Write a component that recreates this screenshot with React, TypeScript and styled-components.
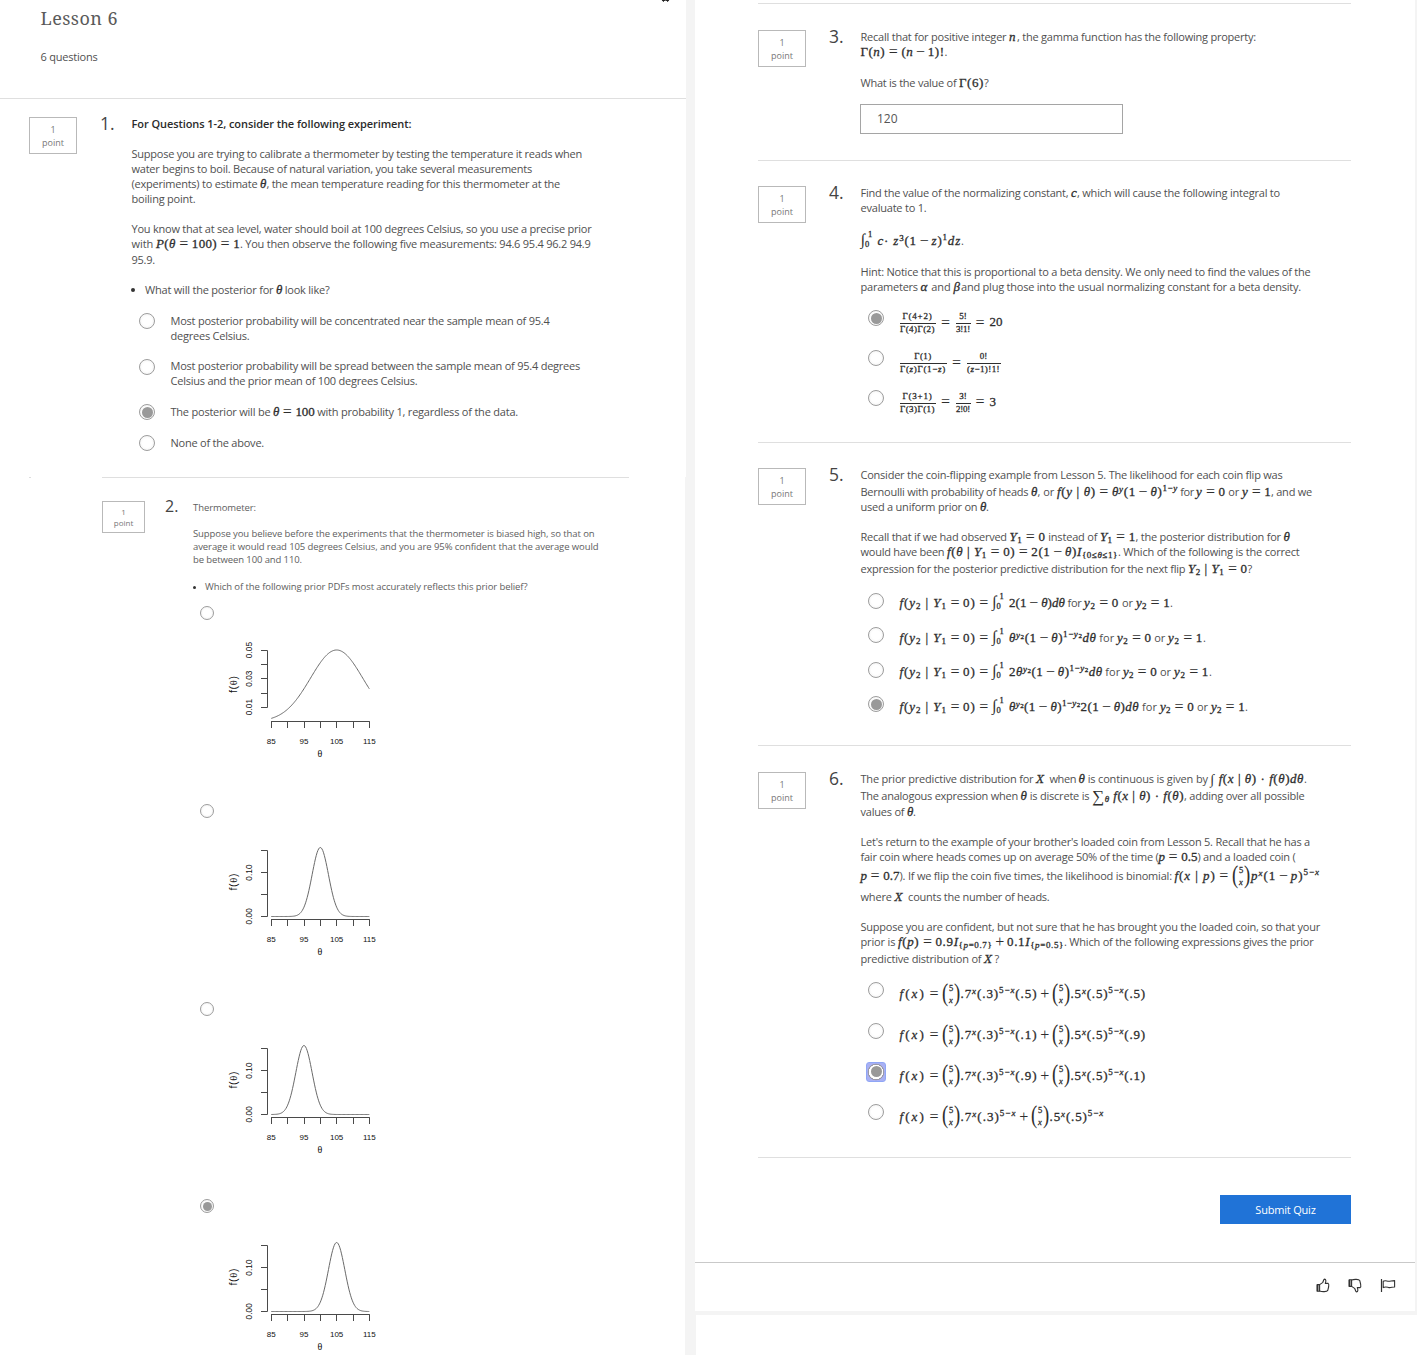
import React, { Fragment, isValidElement, useLayoutEffect, useRef } from "react";
import styled, { createGlobalStyle, css } from "styled-components";

const SANS = '"Open Sans", "Noto Sans", sans-serif';
const SERIF = '"Liberation Serif", "Times New Roman", serif';

const GlobalStyle = createGlobalStyle`
  * { box-sizing: border-box; }
  body { margin: 0; background: #f4f4f4; font-family: ${SANS}; overflow: hidden; }
`;

/* ---------- page frame ---------- */

const Page = styled.main`
  display: flex;
  justify-content: space-between;
  width: 1417px;
  height: 1355px;
  overflow: hidden;
  background: #f4f4f4;
`;
const LeftColumn = styled.div`
  display: flex;
  flex-direction: column;
  width: 686px;
`;
const RightColumn = styled.div`
  display: flex;
  flex-direction: column;
  width: 722px;
`;
const Panel = styled.section<{ $w: number; $h: number }>`
  flex: none;
  display: flex;
  flex-direction: column;
  width: ${(p) => p.$w}px;
  height: ${(p) => p.$h}px;
  background: #fff;
`;
const BlankPanel = styled.div`
  margin: 4px 0 0 1px;
  flex: 1;
  background: #fff;
`;
const Header = styled.header`
  display: flex;
  justify-content: space-between;
  height: 99px;
  padding: 0 16px 0 40.5px;
  border-bottom: 1px solid #dfdfdf;
`;
const LessonTitle = styled.h1`
  margin: 5px 0 25px;
  height: 27px;
  font: 400 18px/27px "Noto Serif", "DejaVu Serif Condensed", "DejaVu Serif", serif;
  color: #5a5a5a;
`;
const Rule = styled.div<{ $left?: number; $width?: number }>`
  flex: none;
  height: 1px;
  margin-left: ${(p) => p.$left ?? 63}px;
  width: ${(p) => p.$width ?? 593}px;
  background: #dfdfdf;
`;
const Speck = styled.span`
  width: 2px;
  height: 1px;
  margin-left: 29px;
  background: #ddd;
`;
const RuleRow = styled.div`
  display: flex;
  height: 1px;
`;

/* ---------- question layout ---------- */

const Question = styled.article<{ $h: number; $pt: number; $pl: number }>`
  display: flex;
  flex: none;
  align-items: flex-start;
  height: ${(p) => p.$h}px;
  padding: ${(p) => p.$pt}px 0 0 ${(p) => p.$pl}px;
`;
const PointBox = styled.div<{ $small?: boolean }>`
  flex: none;
  width: ${(p) => (p.$small ? 43 : 48)}px;
  height: ${(p) => (p.$small ? 32 : 37)}px;
  padding-top: ${(p) => (p.$small ? 4 : 5)}px;
  border: 1px solid #b9b9b9;
  display: flex;
  flex-direction: column;
  align-items: center;
  font-size: ${(p) => (p.$small ? 8 : 9)}px;
  line-height: ${(p) => (p.$small ? 11 : 13)}px;
  color: #777;
`;
const QuestionNumber = styled.div<{ $small?: boolean }>`
  flex: none;
  margin: ${(p) => (p.$small ? "-5px 0 0 20px" : "-4px 0 0 23px")};
  width: ${(p) => (p.$small ? 28 : 31.5)}px;
  font-size: ${(p) => (p.$small ? 16 : 17.5)}px;
  font-weight: 400;
  line-height: 20px;
  color: #444;
`;
const Content = styled.div<{ $small?: boolean }>`
  display: flex;
  flex-direction: column;
  margin-top: -1px;
  font-size: ${(p) => (p.$small ? 9.5 : 11)}px;
  color: ${(p) => (p.$small ? "#5e5e5e" : "#505050")};
`;
const Line = styled.div<{ $mt?: number; $h?: number; $bold?: boolean }>`
  display: flex;
  align-items: baseline;
  flex: none;
  margin-top: ${(p) => p.$mt ?? 0}px;
  height: ${(p) => p.$h ?? 15}px;
  line-height: ${(p) => p.$h ?? 15}px;
  ${(p) => p.$bold && css`font-weight: 600; color: #2b2b2b;`}
`;
const Bullet = styled.span<{ $size: number; $gap: number }>`
  align-self: center;
  width: ${(p) => p.$size}px;
  height: ${(p) => p.$size}px;
  border-radius: 50%;
  background: #333;
  margin: 1px ${(p) => p.$gap}px 0 -0.5px;
`;
const OptionRow = styled.label<{ $mt?: number; $h?: number }>`
  display: flex;
  align-items: flex-start;
  margin-top: ${(p) => p.$mt ?? 0}px;
  height: ${(p) => (p.$h ? `${p.$h}px` : "auto")};
  padding-left: 7.5px;
`;
const OptionBody = styled.div<{ $pt?: number }>`
  display: flex;
  flex-direction: column;
  padding-top: ${(p) => p.$pt ?? 0}px;
  margin-left: 15.5px;
`;
const RadioDot = styled.span<{ $checked?: boolean; $focus?: boolean; $size?: number; $mt?: number }>`
  flex: none;
  display: flex;
  align-items: center;
  justify-content: center;
  width: ${(p) => p.$size ?? 16}px;
  height: ${(p) => p.$size ?? 16}px;
  margin-top: ${(p) => p.$mt ?? 0}px;
  border: 1px solid #9d9d9d;
  border-radius: 50%;
  background: radial-gradient(circle, #fff 45%, #ececec 100%);
  &::after {
    content: "";
    width: ${(p) => (p.$size ?? 16) - 5}px;
    height: ${(p) => (p.$size ?? 16) - 5}px;
    border-radius: 50%;
    background: ${(p) => (p.$checked ? "#999" : "transparent")};
  }
  ${(p) => p.$focus && css`
    width: 20px;
    height: 20px;
    margin: -2px;
    border: 1px solid #8fa6f6;
    border-radius: 3px;
    background: radial-gradient(circle, #fff 0 7px, #9a9aa8 7.4px 8px, #a9b0f3 8.6px);
  `}
`;
const AnswerInput = styled.input`
  margin: 14px 0 0 -0.5px;
  width: 263px;
  height: 30px;
  padding: 0 16px 1px;
  border: 1px solid #a5a5a5;
  border-radius: 0;
  background: #fff;
  font: 400 12px ${SANS};
  color: #555;
  outline: none;
`;

/* ---------- text runs with a set measure ---------- */

const RunBox = styled.span<{ $w: number; $math?: boolean }>`
  flex: none;
  display: inline-block;
  width: ${(p) => p.$w}px;
  white-space: pre;
  ${(p) => p.$math && css`
    font-family: ${SERIF};
    font-size: 13px;
    color: #2e2e2e;
    -webkit-text-stroke: 0.3px #2e2e2e;
  `}
`;
const RunInner = styled.span`
  display: inline-block;
`;

/* Tracks the letters of an element so that it takes exactly the width w. */
function useTracking(w: number) {
  const ref = useRef<HTMLSpanElement>(null);
  useLayoutEffect(() => {
    const el = ref.current;
    if (!el) return;
    el.style.letterSpacing = "0px";
    const natural = el.getBoundingClientRect().width;
    el.style.letterSpacing = "1px";
    const slope = el.getBoundingClientRect().width - natural;
    el.style.letterSpacing = slope > 0 ? `${(w - natural) / slope}px` : "0px";
  }, [w]);
  return ref;
}

type RunProps = { w: number; children: React.ReactNode };

function T({ w, children }: RunProps) {
  const ref = useTracking(w);
  return (
    <RunBox $w={w}>
      <RunInner ref={ref}>{children}</RunInner>
    </RunBox>
  );
}

const Relation = styled.span<{ $gap: number }>`
  margin: 0 ${(p) => p.$gap}px;
  font-size: 16px;
  line-height: 0;
  letter-spacing: 0;
  vertical-align: -1px;
  -webkit-text-stroke-width: 0;
`;

/* Sets spaced = − + signs wider, as a math typesetter does. */
function typeset(node: React.ReactNode): React.ReactNode {
  if (typeof node === "string") {
    return node.split(/(\s+[=−+]\s*)/).map((part, i) =>
      i % 2 ? <Relation key={i} $gap={part.includes("=") ? 3.6 : 2.8}>{part.trim()}</Relation> : part,
    );
  }
  if (Array.isArray(node)) return node.map((n, i) => <Fragment key={i}>{typeset(n)}</Fragment>);
  if (isValidElement<{ children?: React.ReactNode }>(node) && node.type === Fragment) {
    return <>{typeset(node.props.children)}</>;
  }
  return node;
}

function M({ w, children }: RunProps) {
  const ref = useTracking(w);
  return (
    <RunBox $w={w} $math>
      <RunInner ref={ref}>{typeset(children)}</RunInner>
    </RunBox>
  );
}

/* ---------- math pieces ---------- */

const V = styled.i`
  font-style: italic;
`;
const Sup = styled.span<{ $up?: number }>`
  font-size: 9px;
  line-height: 0;
  vertical-align: ${(p) => p.$up ?? 4}px;
`;
const Sub = styled.span`
  font-size: 9px;
  line-height: 0;
  vertical-align: -2px;
`;
const Sub2 = styled.span`
  font-size: 7px;
  line-height: 0;
  vertical-align: -1px;
`;
const BigOp = styled.span<{ $size: number; $drop: number }>`
  font-size: ${(p) => p.$size}px;
  line-height: 0;
  vertical-align: ${(p) => p.$drop}px;
  -webkit-text-stroke-width: 0;
`;
const LimitsBox = styled.span`
  flex: none;
  display: inline-flex;
  align-items: baseline;
  width: 17px;
  font-family: ${SERIF};
  color: #2e2e2e;
`;
const Limits = styled.span`
  display: inline-flex;
  flex-direction: column;
  align-self: center;
  justify-content: space-between;
  height: 20px;
  margin: -11px 0 0;
  font-size: 8.5px;
  line-height: 10px;
  -webkit-text-stroke: 0.3px #2e2e2e;
`;
const LimitTop = styled.span`
  padding-left: 3px;
`;
const Integral = () => (
  <LimitsBox>
    <BigOp $size={16} $drop={-3}>∫</BigOp>
    <Limits>
      <LimitTop>1</LimitTop>
      <span>0</span>
    </Limits>
  </LimitsBox>
);

const BinomBox = styled.span<{ $w: number }>`
  flex: none;
  align-self: center;
  display: inline-flex;
  align-items: center;
  width: ${(p) => p.$w}px;
  height: 24px;
  margin: -4px 0;
  font-family: ${SERIF};
  color: #2e2e2e;
`;
const Paren = styled.span`
  width: 6px;
  margin-top: -2px;
  font-size: 22px;
  line-height: 20px;
  display: flex;
  justify-content: center;
  transform: scale(0.85, 1.12);
`;
const BinomColumn = styled.span`
  display: flex;
  flex-direction: column;
  align-items: center;
  width: 6px;
  font-size: 8.5px;
  line-height: 12px;
  -webkit-text-stroke: 0.3px #2e2e2e;
`;
const Binom = ({ w = 18.5 }: { w?: number }) => (
  <BinomBox $w={w}>
    <Paren>(</Paren>
    <BinomColumn>
      <span>5</span>
      <V>x</V>
    </BinomColumn>
    <Paren>)</Paren>
  </BinomBox>
);

const FractionRow = styled.div`
  display: flex;
  align-items: center;
  height: 25px;
  margin-top: -3px;
  font-family: ${SERIF};
  line-height: 15px;
  color: #2e2e2e;
`;
const Operator = styled.span<{ $w: number }>`
  width: ${(p) => p.$w}px;
  padding-bottom: 3px;
  font-size: 16px;
  text-align: center;
`;
const Value = styled.span`
  padding-bottom: 3px;
`;
const FractionBox = styled.span<{ $w: number }>`
  display: flex;
  flex-direction: column;
  align-items: center;
  width: ${(p) => p.$w}px;
`;
const Numerator = styled.span`
  height: 12px;
  line-height: 11px;
`;
const FractionBar = styled.span`
  align-self: stretch;
  height: 1px;
  background: #2e2e2e;
`;
const Denominator = styled.span`
  height: 12px;
  line-height: 10px;
`;
const SmallMath = styled.span<{ $w: number }>`
  display: block;
  width: ${(p) => p.$w}px;
  font-size: 9px;
  white-space: pre;
  -webkit-text-stroke: 0.3px #2e2e2e;
`;
function SmallRun({ w, children }: RunProps) {
  const ref = useTracking(w);
  return (
    <SmallMath $w={w}>
      <RunInner ref={ref}>{children}</RunInner>
    </SmallMath>
  );
}
type FractionProps = { w: number; num: React.ReactNode; numW: number; den: React.ReactNode; denW: number };
const Fraction = ({ w, num, numW, den, denW }: FractionProps) => (
  <FractionBox $w={w}>
    <Numerator><SmallRun w={numW}>{num}</SmallRun></Numerator>
    <FractionBar />
    <Denominator><SmallRun w={denW}>{den}</SmallRun></Denominator>
  </FractionBox>
);

/* ---------- density plots ---------- */

const PlotOption = styled.label<{ $h: number }>`
  display: flex;
  flex: none;
  flex-direction: column;
  height: ${(p) => p.$h}px;
  padding-left: 7px;
`;
const PlotSvg = styled.svg`
  flex: none;
  display: block;
  margin: 10px 0 0 20px;
  font-family: "Liberation Sans", Arial, sans-serif;
  font-size: 8px;
  fill: #111;
`;

type PlotProps = {
  mean: number;
  sd: number;
  peak: number;
  zero: number;
  ticks: number[];
  labels: [string, number][];
  axisY: number;
  titleY: number;
};
const xAt = (v: number) => 51.3 + ((v - 85) / 30) * 98;

function Plot({ mean, sd, peak, zero, ticks, labels, axisY, titleY }: PlotProps) {
  const points: string[] = [];
  for (let v = 85; v <= 115.001; v += 0.25) {
    const d = Math.exp(-((v - mean) ** 2) / (2 * sd * sd));
    points.push(`${xAt(v).toFixed(2)},${(zero - (zero - peak) * d).toFixed(2)}`);
  }
  return (
    <PlotSvg width="170" height="132" viewBox="0 0 170 132">
      <g stroke="#4a4a4a" strokeWidth="1" fill="none">
        <path d={`M47.5 ${ticks[0]}V${ticks[ticks.length - 1]}`} />
        {ticks.map((t) => <path key={t} d={`M41 ${t}H47.5`} />)}
        <path d={`M51 ${axisY}H149.8`} />
        {[0, 1, 2, 3, 4, 5, 6].map((i) => (
          <path key={i} d={`M${51.5 + Math.round(i * 16.33)} ${axisY}v6.5`} />
        ))}
        <polyline points={points.join(" ")} stroke="#6a6a6a" />
      </g>
      {[85, 95, 105, 115].map((v) => (
        <text key={v} x={xAt(v)} y="114" textAnchor="middle">{v}</text>
      ))}
      <text x="100" y="127" textAnchor="middle" fontFamily="Liberation Serif" fontSize="10">θ</text>
      {labels.map(([s, y]) => (
        <text key={s} transform={`translate(32.3 ${y}) rotate(-90)`} textAnchor="middle" fontSize="8.4">{s}</text>
      ))}
      <text transform={`translate(16.5 ${titleY}) rotate(-90)`} textAnchor="middle" fontSize="10.5" textLength="17">
        f(<tspan fontFamily="Liberation Serif">θ</tspan>)
      </text>
    </PlotSvg>
  );
}
const NARROW = {
  sd: 2.5,
  peak: 19.5,
  zero: 88.5,
  ticks: [22.5, 44.5, 66.5, 88.5],
  labels: [["0.10", 44.6], ["0.00", 88.3]] as [string, number][],
  axisY: 91.5,
  titleY: 54,
};

/* ---------- footer ---------- */

const SubmitButton = styled.button`
  flex: none;
  align-self: flex-end;
  margin: 37px 64px 0 0;
  width: 131px;
  height: 29px;
  padding: 0;
  border: 0;
  background: #2073d7;
  color: #fff;
  font: 400 11px/29px ${SANS};
  letter-spacing: -0.2px;
`;
const Footer = styled.footer`
  flex: none;
  display: flex;
  justify-content: flex-end;
  align-items: flex-start;
  gap: 18px;
  margin-top: 38px;
  height: 49px;
  padding: 15px 19px 0 0;
  border-top: 1px solid #c9c9c9;
`;
const Glyph = styled.svg`
  display: block;
  fill: none;
  stroke: #333;
  stroke-width: 1.1;
  stroke-linejoin: round;
`;
const ThumbPaths = () => (
  <>
    <path d="M3.6 6.6L6.6 4.6C7.6 3.2 7.4 1.2 8.6 1.1C10 1.1 10.2 3 9.3 5.4H12.2C13.2 6 12.9 7.4 12.6 9L11.7 12.6C11 13.9 6 13.9 3.6 13.1" />
    <path d="M1.2 6.6H3.6V13.2H1.2Z" />
    <path d="M1.6 6.6V13.2" strokeWidth="1.8" />
  </>
);

const Points = ({ small }: { small?: boolean }) => (
  <PointBox $small={small}>
    <span>1</span>
    <span>point</span>
  </PointBox>
);

/* ---------- repeated formulas ---------- */

const Y1 = () => <><V>Y</V><Sub>1</Sub></>;
const y2 = <><V>y</V><Sub>2</Sub></>;
const expY2 = <Sup><V>y</V><Sub2>2</Sub2></Sup>;
const expOneY2 = <Sup $up={5}>1−<V>y</V><Sub2>2</Sub2></Sup>;

type PosteriorProps = { integrand: React.ReactNode; widths: [number, number, number, number, number, number]; checked?: boolean };
const PosteriorOption = ({ integrand, widths, checked }: PosteriorProps) => (
  <OptionRow $h={34.6}>
    <RadioDot $checked={checked} />
    <OptionBody $pt={2.7}>
      <Line>
        <M w={92.5}><V>f</V>({y2} | <Y1 /> = 0) = </M>
        <Integral />
        <M w={widths[0]}>{integrand}</M>
        <T w={widths[1]}> for </T>
        <M w={widths[2]}>{y2} = 0</M>
        <T w={widths[3]}> or </T>
        <M w={widths[4]}>{y2} = 1</M>
        <T w={widths[5]}>.</T>
      </Line>
    </OptionBody>
  </OptionRow>
);

const exp5x = <Sup $up={5}>5−<V>x</V></Sup>;
type MixtureProps = { first?: string; second?: string; checked?: boolean };
const MixtureOption = ({ first, second, checked }: MixtureProps) => (
  <OptionRow $h={40.75}>
    <RadioDot $checked={checked} $focus={checked} />
    <OptionBody $pt={4.2}>
      <Line>
        <M w={42.5}><V>f</V>(<V>x</V>) = </M>
        <Binom />
        <M w={first ? 91.5 : 70.5}>.7<Sup><V>x</V></Sup>(.3){exp5x}{first && `(${first})`} + </M>
        <Binom />
        <M w={second ? 75.5 : 54.5}>.5<Sup><V>x</V></Sup>(.5){exp5x}{second && `(${second})`}</M>
      </Line>
    </OptionBody>
  </OptionRow>
);

const θ = <V>θ</V>;

export default function App() {
  return (
    <>
      <GlobalStyle />
      <Page>
        <LeftColumn>
          <Panel $w={686} $h={477}>
            <Header>
              <div>
                <LessonTitle><T w={77.5}>Lesson 6</T></LessonTitle>
                <Content>
                  <Line $mt={-7}><T w={57}>6 questions</T></Line>
                </Content>
              </div>
              <Glyph width="9" height="3" viewBox="0 0 9 3">
                <path d="M1 0H8L6.6 1.6L5 0H4L2.4 1.6Z" fill="#222" stroke="#222" strokeWidth="0.8" />
              </Glyph>
            </Header>
            <Question $h={378} $pt={18} $pl={29}>
              <Points />
              <QuestionNumber>1.</QuestionNumber>
              <Content>
                <Line $bold><T w={280}>For Questions 1-2, consider the following experiment:</T></Line>
                <Line $mt={15}><T w={450.5}>Suppose you are trying to calibrate a thermometer by testing the temperature it reads when</T></Line>
                <Line><T w={400.5}>water begins to boil. Because of natural variation, you take several measurements</T></Line>
                <Line>
                  <T w={128.5}>(experiments) to estimate </T><M w={6.5}>{θ}</M>
                  <T w={293.5}>, the mean temperature reading for this thermometer at the</T>
                </Line>
                <Line><T w={64}>boiling point.</T></Line>
                <Line $mt={15}><T w={460}>You know that at sea level, water should boil at 100 degrees Celsius, so you use a precise prior</T></Line>
                <Line>
                  <T w={24.5}>with </T><M w={84}><V>P</V>({θ} = 100) = 1</M>
                  <T w={350.5}>. You then observe the following five measurements: 94.6 95.4 96.2 94.9</T>
                </Line>
                <Line $mt={1}><T w={23.5}>95.9.</T></Line>
                <Line $mt={15}>
                  <Bullet $size={4} $gap={10} /><T w={131}>What will the posterior for </T><M w={6}>{θ}</M><T w={47.5}> look like?</T>
                </Line>
                <OptionRow $mt={16}>
                  <RadioDot />
                  <OptionBody>
                    <Line><T w={379}>Most posterior probability will be concentrated near the sample mean of 95.4</T></Line>
                    <Line><T w={79}>degrees Celsius.</T></Line>
                  </OptionBody>
                </OptionRow>
                <OptionRow $mt={15}>
                  <RadioDot $mt={1} />
                  <OptionBody>
                    <Line><T w={409.5}>Most posterior probability will be spread between the sample mean of 95.4 degrees</T></Line>
                    <Line><T w={247}>Celsius and the prior mean of 100 degrees Celsius.</T></Line>
                  </OptionBody>
                </OptionRow>
                <OptionRow $mt={16}>
                  <RadioDot $checked />
                  <OptionBody>
                    <Line>
                      <T w={102.5}>The posterior will be </T><M w={41.5}>{θ} = 100</M>
                      <T w={203.5}> with probability 1, regardless of the data.</T>
                    </Line>
                  </OptionBody>
                </OptionRow>
                <OptionRow $mt={15}>
                  <RadioDot />
                  <OptionBody><Line><T w={93.5}>None of the above.</T></Line></OptionBody>
                </OptionRow>
              </Content>
            </Question>
          </Panel>
          <Panel $w={685} $h={878}>
            <RuleRow>
              <Speck />
              <Rule $left={71} $width={527} />
            </RuleRow>
            <Question $h={877} $pt={23} $pl={102}>
              <Points small />
              <QuestionNumber $small>2.</QuestionNumber>
              <Content $small>
                <Line $h={13} $mt={1}><T w={63}>Thermometer:</T></Line>
                <Line $h={13} $mt={13}><T w={401.5}>Suppose you believe before the experiments that the thermometer is biased high, so that on</T></Line>
                <Line $h={13}><T w={405.5}>average it would read 105 degrees Celsius, and you are 95% confident that the average would</T></Line>
                <Line $h={13}><T w={109}>be between 100 and 110.</T></Line>
                <Line $h={13} $mt={14}><Bullet $size={3} $gap={9.5} /><T w={322.5}>Which of the following prior PDFs most accurately reflects this prior belief?</T></Line>
                <Line $h={13} />
                <PlotOption $h={198}>
                  <RadioDot $size={14} />
                  <Plot
                    mean={105} sd={8} peak={20} zero={91.5}
                    ticks={[20.5, 34.5, 48.5, 63.5, 77.5]}
                    labels={[["0.05", 20], ["0.03", 48.7], ["0.01", 77]]}
                    axisY={91.5} titleY={54.5}
                  />
                </PlotOption>
                <PlotOption $h={198}>
                  <RadioDot $size={14} />
                  <Plot mean={100} {...NARROW} />
                </PlotOption>
                <PlotOption $h={197}>
                  <RadioDot $size={14} />
                  <Plot mean={95} {...NARROW} />
                </PlotOption>
                <PlotOption $h={150}>
                  <RadioDot $size={14} $checked />
                  <Plot mean={105} {...NARROW} />
                </PlotOption>
              </Content>
            </Question>
          </Panel>
        </LeftColumn>

        <RightColumn>
          <Panel $w={720} $h={1311}>
            <Panel $w={720} $h={3} />
            <Rule />
            <Question $h={156} $pt={26} $pl={63}>
              <Points />
              <QuestionNumber>3.</QuestionNumber>
              <Content>
                <Line>
                  <T w={148.5}>Recall that for positive integer </T><M w={8}><V>n</V></M>
                  <T w={239}>, the gamma function has the following property:</T>
                </Line>
                <Line><M w={84}>Γ(<V>n</V>) = (<V>n</V> − 1)!</M><T w={2.5}>.</T></Line>
                <Line $mt={16}><T w={98.5}>What is the value of </T><M w={25}>Γ(6)</M><T w={5}>?</T></Line>
                <AnswerInput defaultValue="120" />
              </Content>
            </Question>
            <Rule />
            <Question $h={281} $pt={25} $pl={63}>
              <Points />
              <QuestionNumber>4.</QuestionNumber>
              <Content>
                <Line>
                  <T w={210.5}>Find the value of the normalizing constant, </T><M w={6}><V>c</V></M>
                  <T w={203}>, which will cause the following integral to</T>
                </Line>
                <Line><T w={66}>evaluate to 1.</T></Line>
                <Line $mt={18}>
                  <Integral />
                  <M w={83.5}><V>c</V>· <V>z</V><Sup>3</Sup>(1 − <V>z</V>)<Sup $up={5}>1</Sup><V>dz</V></M><T w={2}>.</T>
                </Line>
                <Line $mt={16}><T w={450}>Hint: Notice that this is proportional to a beta density. We only need to find the values of the</T></Line>
                <Line>
                  <T w={60}>parameters </T><M w={8}><V>α</V></M><T w={25}> and </T><M w={7.5}><V>β</V></M>
                  <T w={340}>and plug those into the usual normalizing constant for a beta density.</T>
                </Line>
                <OptionRow $mt={16} $h={40}>
                  <RadioDot $checked />
                  <OptionBody $pt={4}>
                    <FractionRow>
                      <Fraction w={36} num="Γ(4+2)" numW={30} den="Γ(4)Γ(2)" denW={35} />
                      <Operator $w={20}>=</Operator>
                      <Fraction w={15} num="5!" numW={7.5} den="3!1!" denW={14} />
                      <Operator $w={19}>=</Operator>
                      <Value><M w={13}>20</M></Value>
                    </FractionRow>
                  </OptionBody>
                </OptionRow>
                <OptionRow $h={39.5}>
                  <RadioDot />
                  <OptionBody $pt={4}>
                    <FractionRow>
                      <Fraction w={47} num="Γ(1)" numW={17.5} den={<>Γ(<V>z</V>)Γ(1−<V>z</V>)</>} denW={46} />
                      <Operator $w={20}>=</Operator>
                      <Fraction w={34} num="0!" numW={7.5} den={<>(<V>z</V>−1)!1!</>} denW={33} />
                    </FractionRow>
                  </OptionBody>
                </OptionRow>
                <OptionRow $h={40}>
                  <RadioDot />
                  <OptionBody $pt={4}>
                    <FractionRow>
                      <Fraction w={36} num="Γ(3+1)" numW={30} den="Γ(3)Γ(1)" denW={35} />
                      <Operator $w={20}>=</Operator>
                      <Fraction w={15} num="3!" numW={7.5} den="2!0!" denW={14} />
                      <Operator $w={19}>=</Operator>
                      <Value><M w={6.5}>3</M></Value>
                    </FractionRow>
                  </OptionBody>
                </OptionRow>
              </Content>
            </Question>
            <Rule />
            <Question $h={302} $pt={25} $pl={63}>
              <Points />
              <QuestionNumber>5.</QuestionNumber>
              <Content>
                <Line><T w={422}>Consider the coin-flipping example from Lesson 5. The likelihood for each coin flip was</T></Line>
                <Line $mt={2}>
                  <T w={170.5}>Bernoulli with probability of heads </T><M w={6.5}>{θ}</M><T w={19.5}>, or </T>
                  <M w={121}><V>f</V>(<V>y</V> | {θ}) = {θ}<Sup><V>y</V></Sup>(1 − {θ})<Sup $up={5}>1−<V>y</V></Sup></M>
                  <T w={18}> for </T><M w={29.5}><V>y</V> = 0</M><T w={16.5}> or </T><M w={29}><V>y</V> = 1</M>
                  <T w={41}>, and we</T>
                </Line>
                <Line><T w={119.5}>used a uniform prior on </T><M w={6}>{θ}</M><T w={2.5}>.</T></Line>
                <Line $mt={15}>
                  <T w={149}>Recall that if we had observed </T><M w={36}><Y1 /> = 0</M><T w={54.5}> instead of </T>
                  <M w={35.5}><Y1 /> = 1</M><T w={148}>, the posterior distribution for </T><M w={6.5}>{θ}</M>
                </Line>
                <Line>
                  <T w={86.5}>would have been </T>
                  <M w={171}><V>f</V>({θ} | <Y1 /> = 0) = 2(1 − {θ})<V>I</V><Sub>{"{0≤"}{θ}{"≤1}"}</Sub></M>
                  <T w={181.5}>. Which of the following is the correct</T>
                </Line>
                <Line $mt={2}>
                  <T w={327.5}>expression for the posterior predictive distribution for the next flip </T>
                  <M w={59.5}><V>Y</V><Sub>2</Sub> | <Y1 /> = 0</M><T w={5}>?</T>
                </Line>
                <OptionRow $mt={16} $h={0.5} />
                <PosteriorOption integrand={<>2(1 − {θ})<V>d</V>{θ}</>} widths={[56, 19, 35, 17, 34, 3]} />
                <PosteriorOption integrand={<>{θ}{expY2}(1 − {θ}){expOneY2}<V>d</V>{θ}</>} widths={[87.5, 20.5, 34.5, 16.5, 35, 2.5]} />
                <PosteriorOption integrand={<>2{θ}{expY2}(1 − {θ}){expOneY2}<V>d</V>{θ}</>} widths={[93.5, 20.5, 34, 17, 35, 2.5]} />
                <PosteriorOption checked integrand={<>{θ}{expY2}(1 − {θ}){expOneY2}2(1 − {θ})<V>d</V>{θ}</>} widths={[130, 21, 34, 17, 34, 3]} />
              </Content>
            </Question>
            <Rule />
            <Question $h={411} $pt={26} $pl={63}>
              <Points />
              <QuestionNumber>6.</QuestionNumber>
              <Content>
                <Line>
                  <T w={175.5}>The prior predictive distribution for </T><M w={11}><V>X</V></M><T w={31.5}> when </T><M w={6.5}>{θ}</M>
                  <T w={125.5}> is continuous is given by </T>
                  <M w={93.5}><BigOp $size={14} $drop={-1}>∫</BigOp> <V>f</V>(<V>x</V> | {θ}) · <V>f</V>({θ})<V>d</V>{θ}</M><T w={2.5}>.</T>
                </Line>
                <Line $mt={2}>
                  <T w={160}>The analogous expression when </T><M w={6.5}>{θ}</M><T w={65}> is discrete is </T>
                  <M w={92}><BigOp $size={17} $drop={-2}>∑</BigOp><Sub>{θ}</Sub> <V>f</V>(<V>x</V> | {θ}) · <V>f</V>({θ})</M>
                  <T w={120.5}>, adding over all possible</T>
                </Line>
                <Line $mt={1}><T w={46.5}>values of </T><M w={6}>{θ}</M><T w={2.5}>.</T></Line>
                <Line $mt={15}><T w={449.5}>Let's return to the example of your brother's loaded coin from Lesson 5. Recall that he has a</T></Line>
                <Line>
                  <T w={298}>fair coin where heads comes up on average 50% of the time (</T><M w={39}><V>p</V> = 0.5</M>
                  <T w={98}>) and a loaded coin (</T>
                </Line>
                <Line $mt={4}>
                  <M w={39}><V>p</V> = 0.7</M><T w={275}>). If we flip the coin five times, the likelihood is binomial: </T>
                  <M w={57.5}><V>f</V>(<V>x</V> | <V>p</V>) = </M><Binom w={19} />
                  <M w={69}><V>p</V><Sup><V>x</V></Sup>(1 − <V>p</V>)<Sup $up={5}>5−<V>x</V></Sup></M>
                </Line>
                <Line $mt={6}><T w={34}>where </T><M w={11}><V>X</V></M><T w={144}> counts the number of heads.</T></Line>
                <Line $mt={15}><T w={459.5}>Suppose you are confident, but not sure that he has brought you the loaded coin, so that your</T></Line>
                <Line>
                  <T w={37.5}>prior is </T>
                  <M w={166}><V>f</V>(<V>p</V>) = 0.9<V>I</V><Sub>{"{"}<V>p</V>{"=0.7}"}</Sub> + 0.1<V>I</V><Sub>{"{"}<V>p</V>{"=0.5}"}</Sub></M>
                  <T w={249.5}>. Which of the following expressions gives the prior</T>
                </Line>
                <Line $mt={2}><T w={123.5}>predictive distribution of </T><M w={10.5}><V>X</V></M><T w={5}>?</T></Line>
                <OptionRow $mt={16} $h={0.1} />
                <MixtureOption first=".5" second=".5" />
                <MixtureOption first=".1" second=".9" />
                <MixtureOption first=".9" second=".1" checked />
                <MixtureOption />
              </Content>
            </Question>
            <Rule />
            <SubmitButton>Submit Quiz</SubmitButton>
            <Footer>
              <Glyph width="14" height="15" viewBox="0 0 14 15"><ThumbPaths /></Glyph>
              <Glyph width="14" height="15" viewBox="0 0 14 15">
                <g transform="translate(0 15) scale(1 -1)"><ThumbPaths /></g>
              </Glyph>
              <Glyph width="16" height="15" viewBox="0 0 16 15">
                <path d="M1.5 1V14" strokeWidth="1.2" />
                <path d="M3.2 3.2C5.5 2 7 3.4 9 3.2S12.5 2.6 14.6 2.6V9C12.5 8.8 11 10 9 9.6S5.5 8.4 3.2 9.6Z" />
              </Glyph>
            </Footer>
          </Panel>
          <BlankPanel />
        </RightColumn>
      </Page>
    </>
  );
}
